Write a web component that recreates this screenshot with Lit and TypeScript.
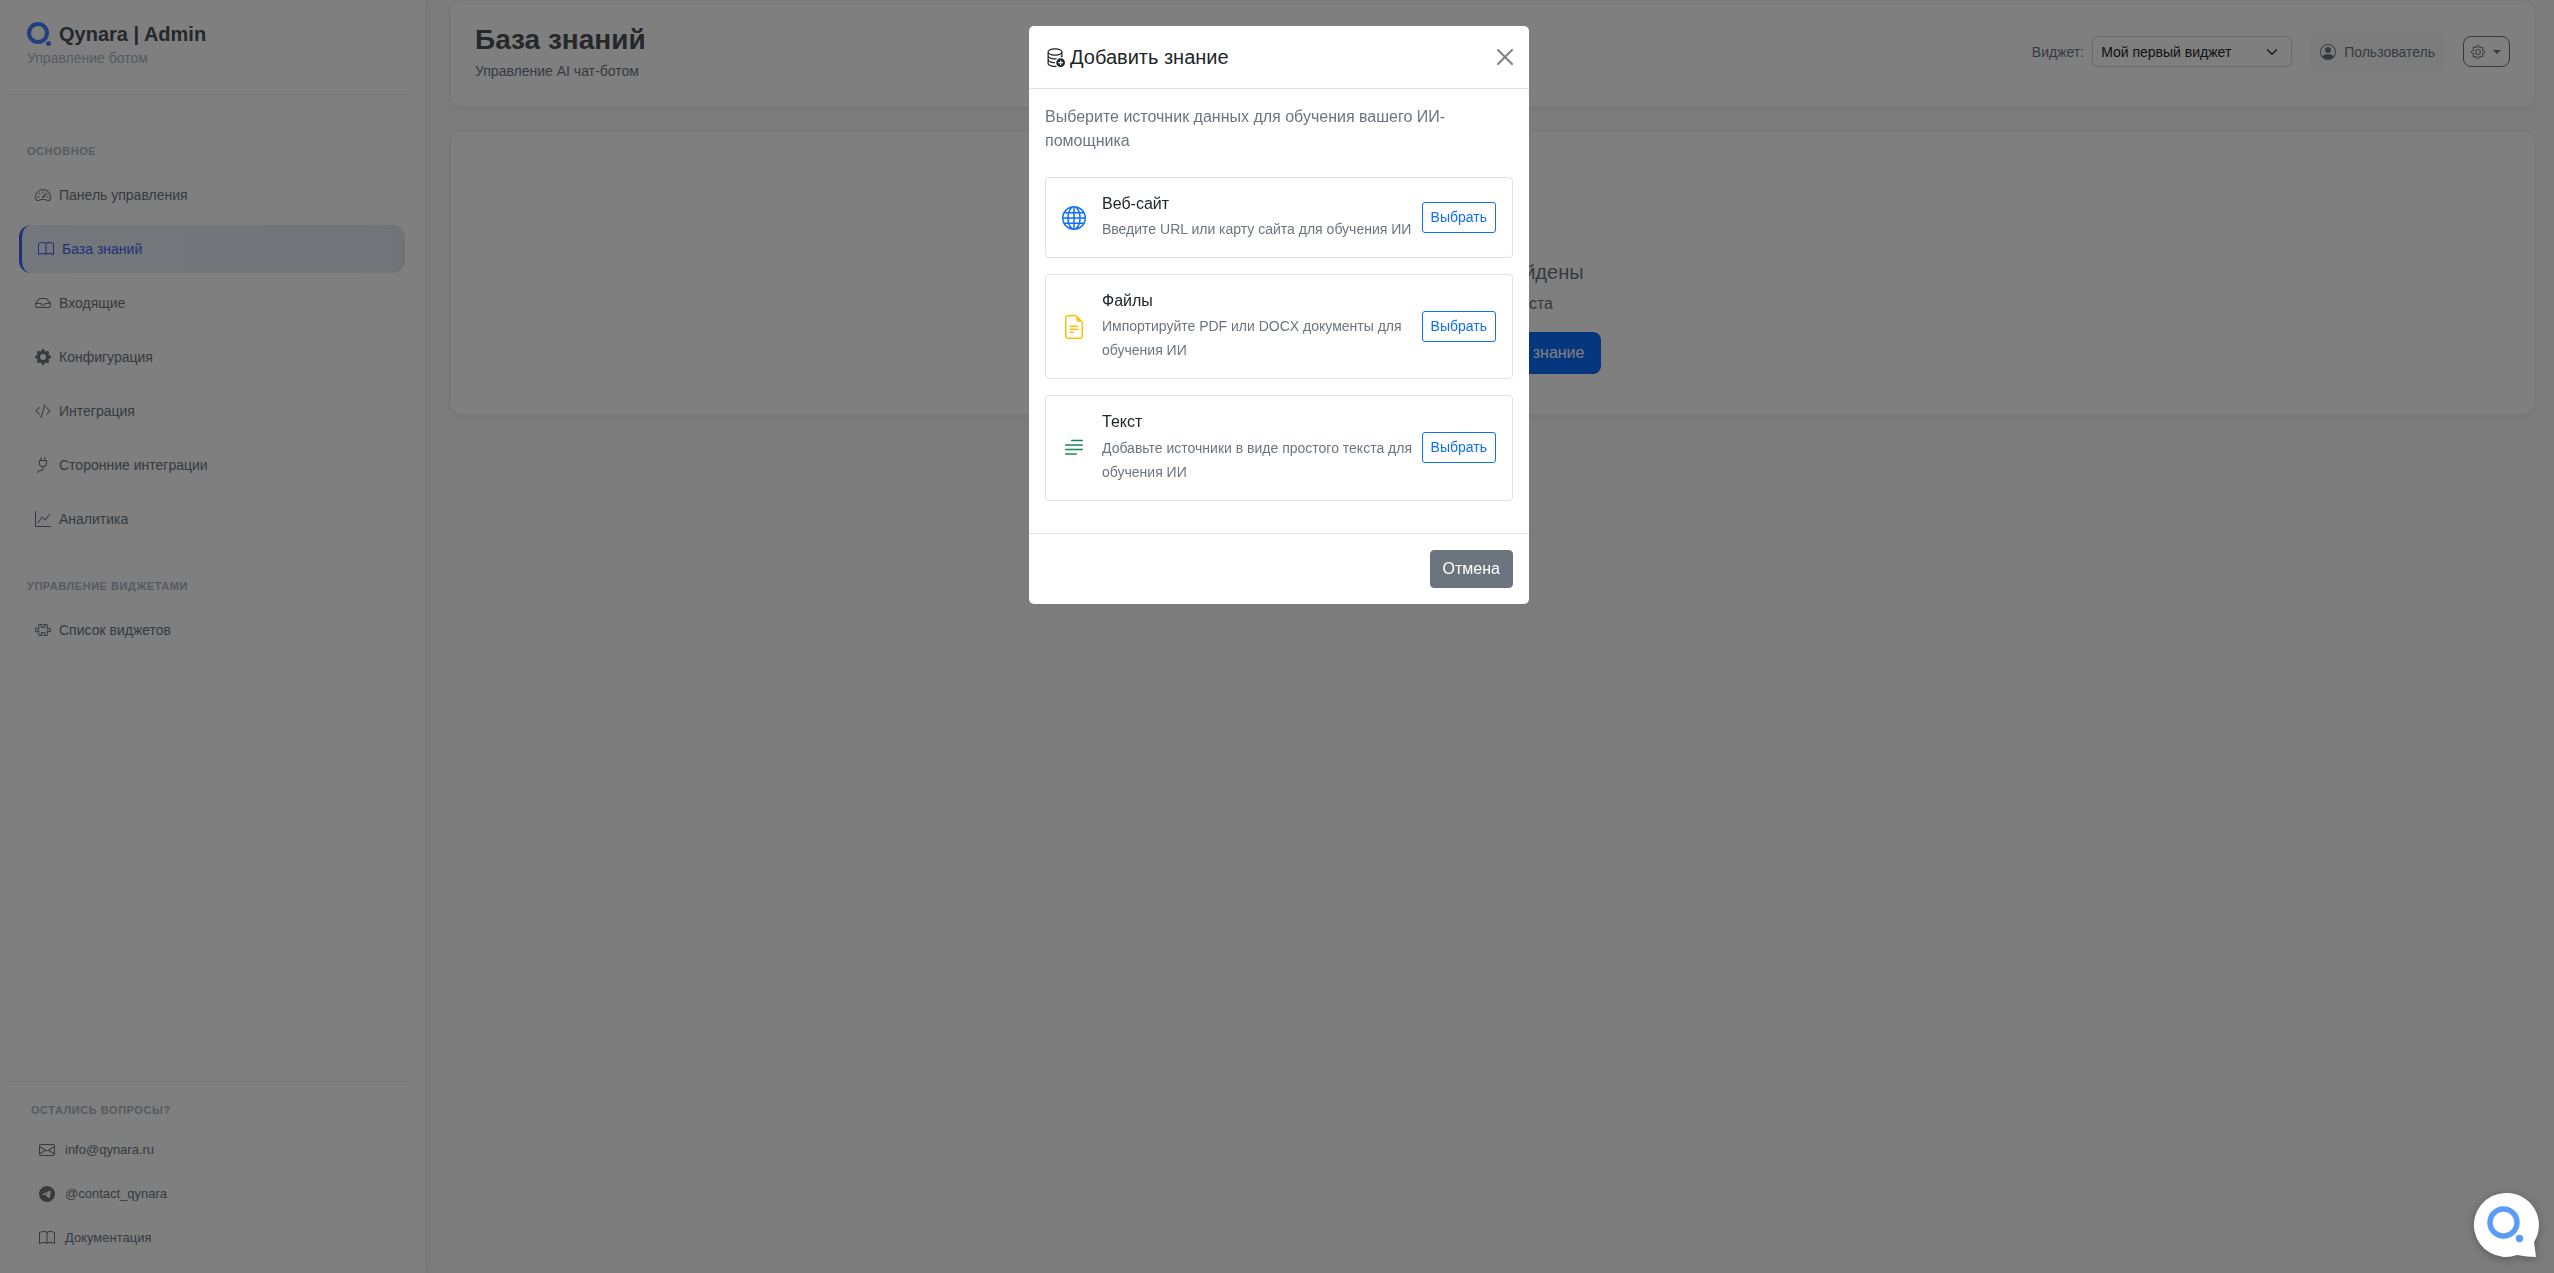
import { LitElement, html, css, svg } from "lit";
import { customElement, property, state } from "lit/decorators.js";
import { classMap } from "lit/directives/class-map.js";

const ICONS: Record<string, string[]> = {
  speedometer: [
    "M8 4a.5.5 0 0 1 .5.5V6a.5.5 0 0 1-1 0V4.5A.5.5 0 0 1 8 4M3.732 5.732a.5.5 0 0 1 .707 0l.915.914a.5.5 0 1 1-.708.708l-.914-.915a.5.5 0 0 1 0-.707M2 10a.5.5 0 0 1 .5-.5h1.586a.5.5 0 0 1 0 1H2.5A.5.5 0 0 1 2 10m9.5 0a.5.5 0 0 1 .5-.5h1.5a.5.5 0 0 1 0 1H12a.5.5 0 0 1-.5-.5m.754-4.246a.39.39 0 0 0-.527-.02L7.547 9.31a.91.91 0 1 0 1.302 1.258l3.434-4.297a.39.39 0 0 0-.029-.518z",
    "M0 10a8 8 0 1 1 15.547 2.661c-.442 1.253-1.845 1.602-2.932 1.25C11.309 13.488 9.475 13 8 13c-1.474 0-3.31.488-4.615.911-1.087.352-2.49.003-2.932-1.25A8 8 0 0 1 0 10m8-7a7 7 0 0 0-6.603 9.329c.203.575.923.876 1.68.63C4.397 12.533 6.358 12 8 12s3.604.532 4.923.96c.757.245 1.477-.056 1.68-.631A7 7 0 0 0 8 3",
  ],
  book: [
    "M1 2.828c.885-.37 2.154-.769 3.388-.893 1.33-.134 2.458.063 3.112.752v9.746c-.935-.53-2.12-.603-3.213-.493-1.18.12-2.37.461-3.287.811zm7.5-.141c.654-.689 1.782-.886 3.112-.752 1.234.124 2.503.523 3.388.893v9.923c-.918-.35-2.107-.692-3.287-.81-1.094-.111-2.278-.039-3.213.492zM8 1.783C7.015.936 5.587.81 4.287.94c-1.514.153-3.042.672-3.994 1.105A.5.5 0 0 0 0 2.5v11a.5.5 0 0 0 .707.455c.882-.4 2.303-.881 3.68-1.02 1.409-.142 2.59.087 3.223.877a.5.5 0 0 0 .78 0c.633-.79 1.814-1.019 3.222-.877 1.378.139 2.8.62 3.681 1.02A.5.5 0 0 0 16 13.5v-11a.5.5 0 0 0-.293-.455c-.952-.433-2.48-.952-3.994-1.105C10.413.809 8.985.936 8 1.783",
  ],
  inbox: [
    "M4.98 4a.5.5 0 0 0-.39.188L1.54 8H6a.5.5 0 0 1 .5.5 1.5 1.5 0 1 0 3 0A.5.5 0 0 1 10 8h4.46l-3.05-3.812A.5.5 0 0 0 11.02 4zm9.954 5H10.45a2.5 2.5 0 0 1-4.9 0H1.066l.32 2.562a.5.5 0 0 0 .497.438h12.234a.5.5 0 0 0 .496-.438zM3.809 3.563A1.5 1.5 0 0 1 4.981 3h6.038a1.5 1.5 0 0 1 1.172.563l3.7 4.625a.5.5 0 0 1 .105.374l-.39 3.124A1.5 1.5 0 0 1 14.117 13H1.883a1.5 1.5 0 0 1-1.489-1.314l-.39-3.124a.5.5 0 0 1 .106-.374z",
  ],
  gearFill: [
    "M9.405 1.05c-.413-1.4-2.397-1.4-2.81 0l-.1.34a1.464 1.464 0 0 1-2.105.872l-.31-.17c-1.283-.698-2.686.705-1.987 1.987l.169.311c.446.82.023 1.841-.872 2.105l-.34.1c-1.4.413-1.4 2.397 0 2.81l.34.1a1.464 1.464 0 0 1 .872 2.105l-.17.31c-.698 1.283.705 2.686 1.987 1.987l.311-.169a1.464 1.464 0 0 1 2.105.872l.1.34c.413 1.4 2.397 1.4 2.81 0l.1-.34a1.464 1.464 0 0 1 2.105-.872l.31.17c1.283.698 2.686-.705 1.987-1.987l-.169-.311a1.464 1.464 0 0 1 .872-2.105l.34-.1c1.4-.413 1.4-2.397 0-2.81l-.34-.1a1.464 1.464 0 0 1-.872-2.105l.17-.31c.698-1.283-.705-2.686-1.987-1.987l-.311.169a1.464 1.464 0 0 1-2.105-.872zM8 10.93a2.929 2.929 0 1 1 0-5.86 2.929 2.929 0 0 1 0 5.858z",
  ],
  gear: [
    "M8 4.754a3.246 3.246 0 1 0 0 6.492 3.246 3.246 0 0 0 0-6.492M5.754 8a2.246 2.246 0 1 1 4.492 0 2.246 2.246 0 0 1-4.492 0",
    "M9.796 1.343c-.527-1.79-3.065-1.79-3.592 0l-.094.319a.873.873 0 0 1-1.255.52l-.292-.16c-1.64-.892-3.433.902-2.54 2.541l.159.292a.873.873 0 0 1-.52 1.255l-.319.094c-1.79.527-1.79 3.065 0 3.592l.319.094a.873.873 0 0 1 .52 1.255l-.16.292c-.892 1.64.901 3.434 2.541 2.54l.292-.159a.873.873 0 0 1 1.255.52l.094.319c.527 1.79 3.065 1.79 3.592 0l.094-.319a.873.873 0 0 1 1.255-.52l.292.16c1.64.893 3.434-.902 2.54-2.541l-.159-.292a.873.873 0 0 1 .52-1.255l.319-.094c1.79-.527 1.79-3.065 0-3.592l-.319-.094a.873.873 0 0 1-.52-1.255l.16-.292c.893-1.64-.902-3.433-2.541-2.54l-.292.159a.873.873 0 0 1-1.255-.52zm-2.633.283c.246-.835 1.428-.835 1.674 0l.094.319a1.873 1.873 0 0 0 2.693 1.115l.291-.16c.764-.415 1.6.42 1.184 1.185l-.159.292a1.873 1.873 0 0 0 1.116 2.692l.318.094c.835.246.835 1.428 0 1.674l-.319.094a1.873 1.873 0 0 0-1.115 2.693l.16.291c.415.764-.42 1.6-1.185 1.184l-.291-.159a1.873 1.873 0 0 0-2.693 1.116l-.094.318c-.246.835-1.428.835-1.674 0l-.094-.319a1.873 1.873 0 0 0-2.692-1.115l-.292.16c-.764.415-1.6-.42-1.184-1.185l.159-.291A1.873 1.873 0 0 0 1.945 8.93l-.319-.094c-.835-.246-.835-1.428 0-1.674l.319-.094A1.873 1.873 0 0 0 3.06 4.377l-.16-.292c-.415-.764.42-1.6 1.185-1.184l.292.159a1.873 1.873 0 0 0 2.692-1.115z",
  ],
  code: [
    "M10.478 1.647a.5.5 0 1 0-.956-.294l-4 13a.5.5 0 0 0 .956.294zM4.854 4.146a.5.5 0 0 1 0 .708L1.707 8l3.147 3.146a.5.5 0 0 1-.708.708l-3.5-3.5a.5.5 0 0 1 0-.708l3.5-3.5a.5.5 0 0 1 .708 0m6.292 0a.5.5 0 0 0 0 .708L14.293 8l-3.147 3.146a.5.5 0 0 0 .708.708l3.5-3.5a.5.5 0 0 0 0-.708l-3.5-3.5a.5.5 0 0 0-.708 0",
  ],
  plug: [
    "M6 0a.5.5 0 0 1 .5.5V3h3V.5a.5.5 0 0 1 1 0V3h1a.5.5 0 0 1 .5.5v3A3.5 3.5 0 0 1 8.5 10c-.002.434-.01.845-.04 1.22-.041.514-.126 1.003-.317 1.424a2.08 2.08 0 0 1-.97 1.028C6.725 13.9 6.169 14 5.5 14c-.998 0-1.61.33-1.974.718A1.92 1.92 0 0 0 3 16H2c0-.616.232-1.367.797-1.968C3.374 13.42 4.261 13 5.5 13c.581 0 .962-.088 1.218-.219.241-.123.4-.3.514-.55.121-.266.193-.621.23-1.09.027-.34.035-.718.037-1.141A3.5 3.5 0 0 1 4 6.5v-3a.5.5 0 0 1 .5-.5h1V.5A.5.5 0 0 1 6 0M5 4v2.5A2.5 2.5 0 0 0 7.5 9h1A2.5 2.5 0 0 0 11 6.5V4z",
  ],
  graph: [
    "M0 0h1v15h15v1H0zm14.817 3.113a.5.5 0 0 1 .07.704l-4.5 5.5a.5.5 0 0 1-.74.037L7.06 6.767l-3.656 5.027a.5.5 0 0 1-.808-.588l4-5.5a.5.5 0 0 1 .758-.06l2.609 2.61 4.15-5.073a.5.5 0 0 1 .704-.07",
  ],
  puzzle: [
    "M3.112 3.645A1.5 1.5 0 0 1 4.605 2H7a.5.5 0 0 1 .5.5v.382c0 .696-.497 1.182-.872 1.469a.5.5 0 0 0-.115.118l-.012.025L6.5 4.5v.003l.003.01q.005.015.036.053a.9.9 0 0 0 .27.194C7.09 4.9 7.51 5 8 5c.492 0 .912-.1 1.19-.24a.9.9 0 0 0 .271-.194.2.2 0 0 0 .036-.054l.003-.01v-.008l-.012-.025a.5.5 0 0 0-.115-.118c-.375-.287-.872-.773-.872-1.469V2.5A.5.5 0 0 1 9 2h2.395a1.5 1.5 0 0 1 1.493 1.645L12.645 6.5h.237c.195 0 .42-.147.675-.48.21-.274.528-.52.943-.52.568 0 .947.447 1.154.862C15.877 6.807 16 7.387 16 8s-.123 1.193-.346 1.638c-.207.415-.586.862-1.154.862-.415 0-.733-.246-.943-.52-.255-.333-.48-.48-.675-.48h-.237l.243 2.855A1.5 1.5 0 0 1 11.395 14H9a.5.5 0 0 1-.5-.5v-.382c0-.696.497-1.182.872-1.469a.5.5 0 0 0 .115-.118l.012-.025.001-.006v-.003l-.003-.01a.2.2 0 0 0-.036-.053.9.9 0 0 0-.27-.194C8.91 11.1 8.49 11 8 11s-.912.1-1.19.24a.9.9 0 0 0-.271.194.2.2 0 0 0-.036.054l-.003.01v.002l.001.006.012.025c.016.027.05.068.115.118.375.287.872.773.872 1.469v.382a.5.5 0 0 1-.5.5H4.605a1.5 1.5 0 0 1-1.493-1.645L3.356 9.5h-.238c-.195 0-.42.147-.675.48-.21.274-.528.52-.943.52-.568 0-.947-.447-1.154-.862C.123 9.193 0 8.613 0 8s.123-1.193.346-1.638C.553 5.947.932 5.5 1.5 5.5c.415 0 .733.246.943.52.255.333.48.48.675.48h.238zM4.605 3a.5.5 0 0 0-.498.55l.001.007.29 3.4A.5.5 0 0 1 3.9 7.5h-.782c-.696 0-1.182-.497-1.469-.872a.5.5 0 0 0-.118-.115l-.025-.012L1.5 6.5h-.003l-.01.003a.2.2 0 0 0-.053.036.9.9 0 0 0-.194.27C1.1 7.09 1 7.51 1 8c0 .492.1.912.24 1.19.07.14.14.225.194.271a.2.2 0 0 0 .054.036l.01.003h.002l.006-.001.025-.012a.5.5 0 0 0 .118-.115c.287-.375.773-.872 1.469-.872H3.9a.5.5 0 0 1 .498.542l-.29 3.408a.5.5 0 0 0 .497.55h1.878c-.048-.166-.195-.352-.463-.557-.274-.21-.52-.528-.52-.943 0-.568.447-.947.862-1.154C6.807 10.123 7.387 10 8 10s1.193.123 1.638.346c.415.207.862.586.862 1.154 0 .415-.246.733-.52.943-.268.205-.415.39-.463.557h1.878a.5.5 0 0 0 .498-.55l-.001-.007-.29-3.4A.5.5 0 0 1 12.1 8.5h.782c.696 0 1.182.497 1.469.872.05.065.091.099.118.115l.025.012.006.001h.003l.01-.003a.2.2 0 0 0 .053-.036.9.9 0 0 0 .194-.27c.14-.28.24-.7.24-1.191s-.1-.912-.24-1.19a.9.9 0 0 0-.194-.271.2.2 0 0 0-.054-.036l-.01-.003H14.5l-.006.001-.025.012a.5.5 0 0 0-.118.115c-.287.375-.773.872-1.469.872H12.1a.5.5 0 0 1-.498-.542l.29-3.407a.5.5 0 0 0-.497-.551H9.517c.048.166.195.352.463.557.274.21.52.528.52.943 0 .568-.447.947-.862 1.154C9.193 5.877 8.613 6 8 6s-1.193-.123-1.638-.346C5.947 5.447 5.5 5.068 5.5 4.5c0-.415.246-.733.52-.943.268-.205.415-.39.463-.557z",
  ],
  envelope: [
    "M0 4a2 2 0 0 1 2-2h12a2 2 0 0 1 2 2v8a2 2 0 0 1-2 2H2a2 2 0 0 1-2-2zm2-1a1 1 0 0 0-1 1v.217l7 4.2 7-4.2V4a1 1 0 0 0-1-1zm13 2.383-4.708 2.825L15 11.105zm-.034 6.876-5.64-3.471L8 9.583l-1.326-.795-5.64 3.47A1 1 0 0 0 2 13h12a1 1 0 0 0 .966-.741M1 11.105l4.708-2.897L1 5.383z",
  ],
  telegram: [
    "M16 8A8 8 0 1 1 0 8a8 8 0 0 1 16 0M8.287 5.906q-1.168.486-4.666 2.01-.567.225-.595.442c-.03.243.275.339.69.47l.175.055c.408.133.958.288 1.243.294q.39.01.868-.32 3.269-2.206 3.374-2.23c.05-.012.12-.026.166.016s.042.12.037.141c-.03.129-1.227 1.241-1.846 1.817-.193.18-.33.307-.358.336a8 8 0 0 1-.188.186c-.38.366-.664.64.015 1.088.327.216.589.393.85.571.284.194.568.387.936.629q.14.092.27.187c.331.236.63.448.997.414.214-.02.435-.22.547-.82.265-1.417.786-4.486.906-5.751a1.4 1.4 0 0 0-.013-.315.34.34 0 0 0-.114-.217.53.53 0 0 0-.31-.093c-.3.005-.763.166-2.984 1.09",
  ],
  person: [
    "M11 6a3 3 0 1 1-6 0 3 3 0 0 1 6 0",
    "M0 8a8 8 0 1 1 16 0A8 8 0 0 1 0 8m8-7a7 7 0 0 0-5.468 11.37C3.242 11.226 4.805 10 8 10s4.757 1.225 5.468 2.37A7 7 0 0 0 8 1",
  ],
  globe: [
    "M0 8a8 8 0 1 1 16 0A8 8 0 0 1 0 8m7.5-6.923c-.67.204-1.335.82-1.887 1.855A8 8 0 0 0 5.145 4H7.5zM4.09 4a9.3 9.3 0 0 1 .64-1.539 7 7 0 0 1 .597-.933A7.03 7.03 0 0 0 2.255 4zm-.582 3.5c.03-.877.138-1.718.312-2.5H1.674a7 7 0 0 0-.656 2.5zM4.847 5a12.5 12.5 0 0 0-.338 2.5H7.5V5zM8.5 5v2.5h2.99a12.5 12.5 0 0 0-.337-2.5zM4.51 8.5a12.5 12.5 0 0 0 .337 2.5H7.5V8.5zm3.99 0V11h2.653c.187-.765.306-1.608.338-2.5zM5.145 12q.208.58.468 1.068c.552 1.035 1.218 1.65 1.887 1.855V12zm.182 2.472a7 7 0 0 1-.597-.933A9.3 9.3 0 0 1 4.09 12H2.255a7 7 0 0 0 3.072 2.472M3.82 11a13.7 13.7 0 0 1-.312-2.5h-2.49c.062.89.291 1.733.656 2.5zm6.853 3.472A7 7 0 0 0 13.745 12H11.91a9.3 9.3 0 0 1-.64 1.539 7 7 0 0 1-.597.933M8.5 12v2.923c.67-.204 1.335-.82 1.887-1.855q.26-.487.468-1.068zm3.68-1h2.146c.365-.767.594-1.61.656-2.5h-2.49a13.7 13.7 0 0 1-.312 2.5m2.802-3.5a7 7 0 0 0-.656-2.5H12.18c.174.782.282 1.623.312 2.5zM11.27 2.461c.247.464.462.98.64 1.539h1.835a7 7 0 0 0-3.072-2.472c.218.284.418.598.597.933M10.855 4a8 8 0 0 0-.468-1.068C9.835 1.897 9.17 1.282 8.5 1.077V4z",
  ],
  file: [
    "M5.5 7a.5.5 0 0 0 0 1h5a.5.5 0 0 0 0-1zM5 9.5a.5.5 0 0 1 .5-.5h5a.5.5 0 0 1 0 1h-5a.5.5 0 0 1-.5-.5m0 2a.5.5 0 0 1 .5-.5h2a.5.5 0 0 1 0 1h-2a.5.5 0 0 1-.5-.5",
    "M9.5 0H4a2 2 0 0 0-2 2v12a2 2 0 0 0 2 2h8a2 2 0 0 0 2-2V4.5zm0 1v2A1.5 1.5 0 0 0 11 4.5h2V14a1 1 0 0 1-1 1H4a1 1 0 0 1-1-1V2a1 1 0 0 1 1-1z",
  ],
  text: [
    "M6.5 2.5h7a.5.5 0 0 1 0 1h-7a.5.5 0 0 1 0-1M2.5 5.5h11a.5.5 0 0 1 0 1h-11a.5.5 0 0 1 0-1M2.5 8.5h11a.5.5 0 0 1 0 1h-11a.5.5 0 0 1 0-1M2.5 11.5h7a.5.5 0 0 1 0 1h-7a.5.5 0 0 1 0-1",
  ],
  databaseAdd: [
    "M12.5 16a3.5 3.5 0 1 0 0-7 3.5 3.5 0 0 0 0 7m.5-5v1h1a.5.5 0 0 1 0 1h-1v1a.5.5 0 0 1-1 0v-1h-1a.5.5 0 0 1 0-1h1v-1a.5.5 0 0 1 1 0",
    "M12.096 6.223A5 5 0 0 0 13 5.698V7c0 .289-.213.654-.753 1.007a4.5 4.5 0 0 1 1.753.25V4c0-1.007-.875-1.755-1.904-2.223C11.022 1.289 9.573 1 8 1s-3.022.289-4.096.777C2.875 2.245 2 2.993 2 4v9c0 1.007.875 1.755 1.904 2.223C4.978 15.71 6.427 16 8 16c.536 0 1.058-.034 1.555-.097a4.5 4.5 0 0 1-.813-.927Q8.378 15 8 15c-1.464 0-2.766-.27-3.682-.687C3.356 13.875 3 13.373 3 13v-1.302c.271.202.58.378.904.525C4.978 12.71 6.427 13 8 13h.027a4.6 4.6 0 0 1 0-1H8c-1.464 0-2.766-.27-3.682-.687C3.356 10.875 3 10.373 3 10V8.698c.271.202.58.378.904.525C4.978 9.71 6.427 10 8 10q.393 0 .774-.024a4.5 4.5 0 0 1 1.102-1.132C9.298 8.944 8.666 9 8 9c-1.464 0-2.766-.27-3.682-.687C3.356 7.875 3 7.373 3 7V5.698c.271.202.58.378.904.525C4.978 6.711 6.427 7 8 7s3.022-.289 4.096-.777M3 4c0-.374.356-.875 1.318-1.313C5.234 2.271 6.536 2 8 2s2.766.27 3.682.687C12.644 3.125 13 3.627 13 4c0 .374-.356.875-1.318 1.313C10.766 5.729 9.464 6 8 6s-2.766-.27-3.682-.687C3.356 4.875 3 4.373 3 4",
  ],
  close: [
    "M.293.293a1 1 0 0 1 1.414 0L8 6.586 14.293.293a1 1 0 1 1 1.414 1.414L9.414 8l6.293 6.293a1 1 0 0 1-1.414 1.414L8 9.414l-6.293 6.293a1 1 0 0 1-1.414-1.414L6.586 8 .293 1.707a1 1 0 0 1 0-1.414",
  ],
};

@customElement("ui-icon")
class UiIcon extends LitElement {
  @property() name = "book";

  static styles = css`
    :host {
      display: inline-flex;
      flex: none;
      width: 16px;
      height: 16px;
    }
    svg {
      width: 100%;
      height: 100%;
      fill: currentColor;
    }
  `;

  render() {
    return html`<svg viewBox="0 0 16 16" aria-hidden="true">
      ${ICONS[this.name].map((d) => svg`<path fill-rule="evenodd" d=${d}></path>`)}
    </svg>`;
  }
}

interface NavEntry {
  icon: string;
  label: string;
  active?: boolean;
}

const MAIN_NAV: NavEntry[] = [
  { icon: "speedometer", label: "Панель управления" },
  { icon: "book", label: "База знаний", active: true },
  { icon: "inbox", label: "Входящие" },
  { icon: "gearFill", label: "Конфигурация" },
  { icon: "code", label: "Интеграция" },
  { icon: "plug", label: "Сторонние интеграции" },
  { icon: "graph", label: "Аналитика" },
];

const WIDGET_NAV: NavEntry[] = [{ icon: "puzzle", label: "Список виджетов" }];

const CONTACTS: NavEntry[] = [
  { icon: "envelope", label: "info@qynara.ru" },
  { icon: "telegram", label: "@contact_qynara" },
  { icon: "book", label: "Документация" },
];

@customElement("side-bar")
class SideBar extends LitElement {
  static styles = css`
    :host {
      display: flex;
      flex-direction: column;
      box-sizing: border-box;
      padding: 0 12px 15px 8px;
      background: #fff;
      border-right: 1px solid #e9ecef;
      box-shadow: 2px 0 8px rgba(0, 0, 0, 0.04);
      color: #6c757d;
      font-size: 14px;
      line-height: 20px;
    }
    a {
      color: inherit;
      text-decoration: none;
    }
    .brand {
      padding: 20px 19px 26px;
      border-bottom: 1px solid #e9ecef;
    }
    .name {
      display: flex;
      align-items: center;
      gap: 8px;
      margin: 0;
      color: #495057;
      font-size: 20px;
      line-height: 28px;
      font-weight: 700;
    }
    .mark {
      width: 24px;
      height: 24px;
    }
    .tagline {
      color: #adb5bd;
    }
    .label {
      margin: 0;
      padding: 0 19px;
      color: #adb5bd;
      font-size: 11px;
      line-height: 16px;
      font-weight: 700;
      letter-spacing: 0.05em;
      text-transform: uppercase;
    }
    .group {
      padding-top: 48px;
    }
    .group + .group {
      padding-top: 35px;
    }
    .nav {
      display: flex;
      flex-direction: column;
      gap: 6px;
      margin-top: 12px;
      padding: 0 8px 0 11px;
    }
    .item {
      display: flex;
      align-items: center;
      gap: 8px;
      height: 48px;
      padding: 0 16px;
      box-sizing: border-box;
      border-radius: 12px;
    }
    .active {
      border-left: 3px solid #4361ee;
      background: linear-gradient(90deg, #e8eff8, #e1e7f1);
      color: #4361ee;
    }
    .foot {
      margin-top: auto;
      padding-top: 20px;
      border-top: 1px solid #e9ecef;
      font-size: 13px;
    }
    .foot .label {
      padding: 0 23px;
    }
    .contacts {
      display: flex;
      flex-direction: column;
      gap: 4px;
      margin-top: 12px;
      padding: 0 15px;
    }
    .contacts .item {
      height: 40px;
      gap: 10px;
    }
  `;

  private entries(list: NavEntry[]) {
    return list.map(
      (n) => html`<a href="#" class=${classMap({ item: true, active: !!n.active })}>
        <ui-icon name=${n.icon}></ui-icon><span>${n.label}</span>
      </a>`
    );
  }

  render() {
    return html`
      <div class="brand">
        <h1 class="name">
          <svg class="mark" viewBox="0 0 24 24" aria-hidden="true">
            <circle cx="11" cy="11" r="9" fill="none" stroke="#467dff" stroke-width="4"></circle>
            <circle cx="21.5" cy="21.5" r="2.5" fill="#467dff"></circle>
          </svg>
          Qynara | Admin
        </h1>
        <div class="tagline">Управление ботом</div>
      </div>
      <section class="group">
        <h2 class="label">Основное</h2>
        <nav class="nav">${this.entries(MAIN_NAV)}</nav>
      </section>
      <section class="group">
        <h2 class="label">Управление виджетами</h2>
        <nav class="nav">${this.entries(WIDGET_NAV)}</nav>
      </section>
      <footer class="foot">
        <h2 class="label">Остались вопросы?</h2>
        <div class="contacts">${this.entries(CONTACTS)}</div>
      </footer>
    `;
  }
}

@customElement("page-header")
class PageHeader extends LitElement {
  static styles = css`
    :host {
      display: flex;
      align-items: center;
      justify-content: space-between;
      padding: 21px 24px 25px;
      border: 1px solid #f1f3f5;
      border-radius: 12px;
      background: #fff;
      box-shadow: 0 2px 8px rgba(0, 0, 0, 0.06);
      color: #6c757d;
      font-size: 14px;
      line-height: 20px;
    }
    h2 {
      margin: 0 0 3px;
      color: #495057;
      font-size: 28px;
      line-height: 36px;
      font-weight: 700;
    }
    .tools,
    .field,
    .user,
    .settings {
      display: flex;
      align-items: center;
    }
    .tools {
      gap: 17px;
    }
    .field {
      gap: 8px;
    }
    .select {
      position: relative;
      display: flex;
      align-items: center;
    }
    select {
      width: 200px;
      height: 31px;
      padding: 0 36px 0 8px;
      appearance: none;
      border: 1px solid #ced4da;
      border-radius: 6px;
      background: #fff;
      color: #212529;
      font: inherit;
    }
    .chevron {
      position: absolute;
      right: 14px;
      width: 12px;
      height: 12px;
      pointer-events: none;
    }
    .user {
      gap: 8px;
      height: 40px;
      padding: 0 11px;
      border: 0;
      border-radius: 8px;
      background: #f8f9fa;
      color: inherit;
      font: inherit;
    }
    .settings {
      gap: 8px;
      height: 31px;
      padding: 0 8px 0 7px;
      border: 1px solid #6c757d;
      border-radius: 8px;
      background: none;
      color: #6c757d;
    }
    .settings ui-icon {
      width: 14px;
      height: 14px;
    }
    .caret {
      border: 4px solid transparent;
      border-top-color: currentColor;
      border-bottom: 0;
    }
  `;

  render() {
    return html`
      <div>
        <h2>База знаний</h2>
        <div>Управление AI чат-ботом</div>
      </div>
      <div class="tools">
        <div class="field">
          <label for="widget">Виджет:</label>
          <span class="select">
            <select id="widget">
              <option>Мой первый виджет</option>
            </select>
            <svg class="chevron" viewBox="0 0 16 16" aria-hidden="true">
              <path d="m2 5 6 6 6-6" fill="none" stroke="#343a40" stroke-width="2" stroke-linecap="round" stroke-linejoin="round"></path>
            </svg>
          </span>
        </div>
        <button class="user" type="button"><ui-icon name="person"></ui-icon>Пользователь</button>
        <button class="settings" type="button" aria-label="Настройки">
          <ui-icon name="gear"></ui-icon><span class="caret"></span>
        </button>
      </div>
    `;
  }
}

interface Source {
  icon: string;
  tone: string;
  title: string;
  text: string;
}

const SOURCES: Source[] = [
  { icon: "globe", tone: "blue", title: "Веб-сайт", text: "Введите URL или карту сайта для обучения ИИ" },
  { icon: "file", tone: "amber", title: "Файлы", text: "Импортируйте PDF или DOCX документы для обучения ИИ" },
  { icon: "text", tone: "green", title: "Текст", text: "Добавьте источники в виде простого текста для обучения ИИ" },
];

@customElement("source-dialog")
class SourceDialog extends LitElement {
  static styles = css`
    :host {
      display: flex;
      flex-direction: column;
      width: 500px;
      max-width: 100%;
      border-radius: 5px;
      background: #fff;
      color: #212529;
      font-size: 16px;
      line-height: 24px;
    }
    button {
      font: inherit;
      cursor: pointer;
    }
    .head {
      display: flex;
      align-items: center;
      justify-content: space-between;
      padding: 16px;
      border-bottom: 1px solid #dee2e6;
    }
    .title {
      display: flex;
      align-items: center;
      gap: 5px;
      margin: 0;
      font-size: 20px;
      line-height: 30px;
      font-weight: 400;
    }
    .title ui-icon {
      width: 20px;
      height: 20px;
    }
    .close {
      display: flex;
      padding: 0;
      border: 0;
      background: none;
      color: #808080;
    }
    .body {
      padding: 16px 16px 32px;
    }
    .lead {
      margin: 0 0 24px;
      color: #6c757d;
    }
    .list {
      display: flex;
      flex-direction: column;
      gap: 16px;
      margin: 0;
      padding: 0;
      list-style: none;
    }
    .source {
      display: flex;
      align-items: center;
      padding: 16px;
      border: 1px solid #dee2e6;
      border-radius: 4px;
    }
    .source ui-icon {
      width: 24px;
      height: 24px;
      margin-right: 16px;
    }
    .blue {
      color: #0d6efd;
    }
    .amber {
      color: #ffc107;
    }
    .green {
      color: #198754;
    }
    .info {
      flex: 1;
    }
    h6 {
      margin: 0 0 4px;
      font-size: 16px;
      line-height: 1.2;
      font-weight: 400;
    }
    .text {
      color: #6c757d;
      font-size: 14px;
    }
    .pick {
      margin-left: 8px;
      padding: 4px 8px;
      border: 1px solid #0d6efd;
      border-radius: 3px;
      background: none;
      color: #0d6efd;
      font-size: 14px;
      line-height: 21px;
    }
    .foot {
      display: flex;
      justify-content: flex-end;
      padding: 16px;
      border-top: 1px solid #dee2e6;
    }
    .cancel {
      padding: 6px 12px;
      border: 1px solid #6c757d;
      border-radius: 4px;
      background: #6c757d;
      color: #fff;
    }
  `;

  private close() {
    this.dispatchEvent(new CustomEvent("close"));
  }

  render() {
    return html`
      <header class="head">
        <h5 class="title"><ui-icon name="databaseAdd"></ui-icon>Добавить знание</h5>
        <button class="close" type="button" aria-label="Закрыть" @click=${this.close}>
          <ui-icon name="close"></ui-icon>
        </button>
      </header>
      <div class="body">
        <p class="lead">Выберите источник данных для обучения вашего ИИ-помощника</p>
        <ul class="list">
          ${SOURCES.map(
            (s) => html`<li class="source">
              <ui-icon class=${s.tone} name=${s.icon}></ui-icon>
              <div class="info">
                <h6>${s.title}</h6>
                <div class="text">${s.text}</div>
              </div>
              <button class="pick" type="button">Выбрать</button>
            </li>`
          )}
        </ul>
      </div>
      <footer class="foot">
        <button class="cancel" type="button" @click=${this.close}>Отмена</button>
      </footer>
    `;
  }
}

@customElement("app-root")
class AppRoot extends LitElement {
  @state() private open = true;

  static styles = css`
    :host {
      display: grid;
      grid-template-columns: 426px 1fr;
      min-height: 100vh;
      background: #f8f9fa;
      font-family: "Liberation Sans", Arial, sans-serif;
    }
    .main {
      display: flex;
      flex-direction: column;
      gap: 24px;
      padding: 0 19px 24px 24px;
    }
    .empty {
      display: flex;
      flex-direction: column;
      align-items: center;
      padding: 40px 24px;
      border: 1px solid #f1f3f5;
      border-radius: 12px;
      background: #fff;
      box-shadow: 0 2px 8px rgba(0, 0, 0, 0.06);
      color: #6c757d;
      font-size: 16px;
      line-height: 24px;
    }
    .empty ui-icon {
      width: 64px;
      height: 64px;
      margin-bottom: 24px;
    }
    .empty h5 {
      margin: 0 0 8px;
      font-size: 20px;
      line-height: 24px;
      font-weight: 400;
    }
    .empty p {
      margin: 0 0 16px;
    }
    .add {
      height: 42px;
      padding: 0 17px;
      border: 0;
      border-radius: 8px;
      background: #0d6efd;
      color: #fff;
      font: inherit;
      cursor: pointer;
    }
    .backdrop {
      position: fixed;
      inset: 0;
      display: flex;
      justify-content: center;
      align-items: flex-start;
      padding: 26px 0 0 4px;
      background: rgba(0, 0, 0, 0.5);
    }
    .chat {
      position: fixed;
      right: 11px;
      bottom: 11px;
      width: 76px;
      height: 76px;
      padding: 0;
      border: 0;
      background: none;
      cursor: pointer;
      filter: drop-shadow(0 2px 4px rgba(0, 0, 0, 0.25));
    }
    .chat svg {
      display: block;
      width: 76px;
      height: 76px;
    }
  `;

  render() {
    return html`
      <side-bar></side-bar>
      <main class="main">
        <page-header></page-header>
        <section class="empty">
          <ui-icon name="databaseAdd"></ui-icon>
          <h5>Знания не найдены</h5>
          <p>Добавьте текста</p>
          <button class="add" type="button" @click=${() => (this.open = true)}>Добавить первое знание</button>
        </section>
      </main>
      ${this.open
        ? html`<div class="backdrop">
            <source-dialog role="dialog" aria-modal="true" aria-label="Добавить знание" @close=${() => (this.open = false)}></source-dialog>
          </div>`
        : null}
      <button class="chat" type="button" aria-label="Открыть чат">
        <svg viewBox="0 0 76 76" aria-hidden="true">
          <path d="M38 7a32 32 0 1 0 12 62q10 2 19 2l-2-15A32 32 0 0 0 38 7" fill="#fff"></path>
          <circle cx="36.5" cy="36.5" r="13.5" fill="none" stroke="#5b9cf6" stroke-width="5.5"></circle>
          <circle cx="52.5" cy="52.5" r="3.7" fill="#5b9cf6"></circle>
        </svg>
      </button>
    `;
  }
}
